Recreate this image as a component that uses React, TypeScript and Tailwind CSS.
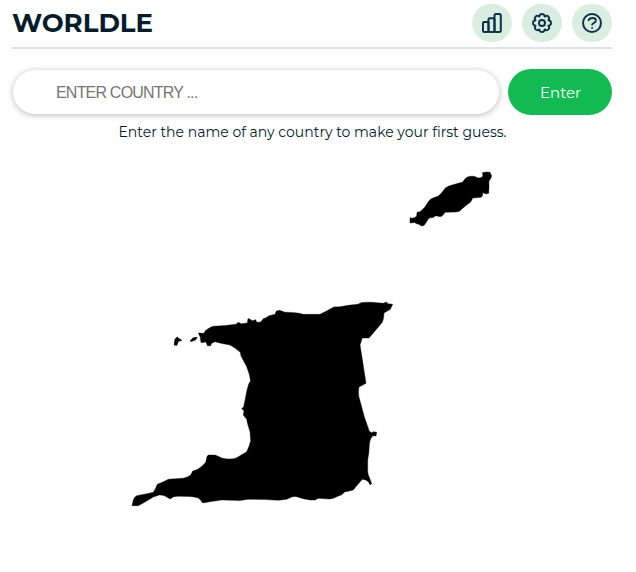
import type { ReactNode } from "react";

function RoundButton({ label, children }: { label: string; children: ReactNode }) {
  return (
    <button aria-label={label} className="flex h-[38px] w-10 items-center justify-center rounded-full bg-[#d9eee1] text-[#0d3349]">
      <svg width="24" height="24" viewBox="0 0 24 24" fill="none" stroke="currentColor" strokeWidth="2" strokeLinecap="round" strokeLinejoin="round">
        {children}
      </svg>
    </button>
  );
}

function CountryShape() {
  return (
    <svg className="mt-[18px] block" width="600" height="400" viewBox="12 160 600 400" fill="#000" stroke="#000" strokeWidth="0.4" strokeLinejoin="round">
      <path d="M410 217.7L412 218.3Q415 218 416.7 216L417 212.3L420 211.7L424.5 207.5L428.5 201.5Q430 199 432.3 198.3L438.3 196L441.5 193L445.3 188Q449 185.5 452 185L458.3 183.3L462.7 182L465 178.7Q467.5 176.5 470 176.3Q472 176 474 176.3L478.3 178L482 177.5L482.9 175L482.3 172.7L486 172L490 172.3L491.7 176L490.5 179L488.9 181L489 187L488.7 193.3L486 194L482.7 192.7L482.5 195.5L481.3 197.3L472.7 198L470.7 202L466 205.5L459.3 211.3L456 212L445 212.3Q444 214.5 441.7 216.3Q439 217 437.5 216L435 216L433.5 217.5L430 217.8L428.3 219L426.5 222L424 225.5L421 226L419.5 224.5L416.7 223.8L414.5 222.5L410 223Z" />
      <path d="M198.3 333L204 333.3L205.5 330.5L207.7 329Q210.5 326.8 213.3 326.3Q225 326 236 324.3L238.3 322.3L241 323.7L247.3 323L248 318.5L250 319.3L252.3 320.7L255.7 319.7L256.7 322.3Q259 322.3 261 321.7L263.3 318.7L266 317.8L269 315.7L275 314.3L276.3 311L279.7 310.3L285 312.3Q290 312.2 295 312.7Q299 313 303.3 314.3L320 314.3Q327 311 333.7 307L340 306.7Q348 305 357.7 304.3L361.7 302.6Q366 302 371.7 302.3L383.3 303.3L386.3 302L388 303.7L392.7 304.3L390.3 309.3L384 313Q384 319 382.3 322.3L369 338L362.3 338L360 345L362.7 361.7L366 383.3L359 387Q358 392 358.9 396.7L364.3 416.7L369.3 431.2L371.7 432.7L373.3 431.7L376.7 432.3L376 436L373 435.7Q369.8 438.5 369.4 444L368.8 453L367.7 460L367.7 471.7Q368 475 369.3 477.3L371.7 483.7L370 484.7L368.3 481.7Q366 479.5 362.3 479.3L355 487.7Q354 490 352.3 490.3Q348 491.5 345 491.7L341.7 494.7Q337 496.5 333.3 498.3Q331 499.1 329 499L318.3 498.3L315 500L310 500Q303 499 296.7 496.7Q294 496.3 291.7 497L286.7 499.3L278.3 500.3Q263 499.2 248.3 499.3L240 500.5L221.7 500L211 501.5L202.7 503L200.5 500L198.3 498Q194 496.8 190 496.5L180 496.3Q176 496 173.3 497L170 499L165 496Q162 494.8 159.3 495L153.3 497L145 502L138.3 505.7L132 505.7L133.3 500Q134.5 496.8 136.7 495.7L147 493.7L153.3 492.3Q155.6 489 157.3 484.3L164 481.5L168.3 479.3L176 478.8L183.3 478.2Q187.5 477.5 190.7 475L192.7 471Q197 470 200 467.7Q203.7 465 205.7 462.3L207 456.5L208.3 455L215 455Q218 456 221.7 458Q226 459.2 230 459Q233.5 458.9 236.7 457.7L246.7 451.7Q249.5 446 250.7 440.7L250 431.7L247.5 423.5L246.7 419.3L243.3 415L244 410.7L241.7 408.7L243.7 406.7L247 390L248.7 384L250.5 381L249.5 375L246.7 366.7L241 356L240.3 352.3L235.3 348.2L230 345L222 343.5L215 341.7L211.7 343.3L210.3 346L207.3 345.5L206 342L201 342.7L200.3 337.3Z" />
      <path strokeWidth="0.8" d="M174.3 345L175 339.3L177.3 337L179 338.7L181.7 340.3L178.3 341.3L176.7 345.3ZM190 341L193 338L197 337.3L195.7 339.7L191.7 341.3Z" />
    </svg>
  );
}

export default function App() {
  return (
    <div className="h-[572px] w-[636px] overflow-hidden bg-white pl-3 font-['Montserrat','Inter',sans-serif] text-[#041c2c]">
      <header className="flex h-[49px] w-[600px] items-start justify-between border-b-2 border-[#d7e3ee] pt-1">
        <h1 className="text-[26px] leading-[38px] font-bold">WORLDLE</h1>
        <div className="flex gap-2.5">
          <RoundButton label="Statistics">
            <rect x="3" y="11" width="5.5" height="10" rx="1.2" />
            <rect x="8.5" y="7.2" width="6" height="13.8" rx="1.2" />
            <rect x="14.5" y="3" width="6.3" height="18" rx="1.5" />
          </RoundButton>
          <RoundButton label="Settings">
            <path d="M9.7 4.2C10.2 2.6 13.8 2.6 14.3 4.2L14.7 5.5L16 4.9C17.6 4.2 19.8 6.4 19.1 8L18.5 9.3L19.8 9.7C21.4 10.2 21.4 13.8 19.8 14.3L18.5 14.7L19.1 16C19.8 17.6 17.6 19.8 16 19.1L14.7 18.5L14.3 19.8C13.8 21.4 10.2 21.4 9.7 19.8L9.3 18.5L8 19.1C6.4 19.8 4.2 17.6 4.9 16L5.5 14.7L4.2 14.3C2.6 13.8 2.6 10.2 4.2 9.7L5.5 9.3L4.9 8C4.2 6.4 6.4 4.2 8 4.9L9.3 5.5Z" />
            <circle cx="12" cy="12" r="3" />
          </RoundButton>
          <RoundButton label="Help">
            <circle cx="12" cy="12" r="9" />
            <path strokeWidth="1.8" d="M8.6 9.2C10 6 16 6.4 15.9 9.6C15.8 12.1 12.1 12.1 12.1 13.7M12.1 17v.1" />
          </RoundButton>
        </div>
      </header>
      <form className="mt-5 flex w-[600px] items-center justify-between" onSubmit={(event) => event.preventDefault()}>
        <input
          aria-label="Country"
          placeholder="ENTER COUNTRY ..."
          className="ml-px h-11 w-[486px] rounded-full bg-white px-[43px] pt-px font-['Liberation_Sans',Arial,sans-serif] text-base tracking-[-0.8px] shadow-[0_1px_6px_rgba(0,0,0,0.28)] outline-none placeholder:text-[#757575]"
        />
        <button className="h-[46px] w-[104px] rounded-full bg-[#12bb52] pt-0.5 pl-px text-[15px] text-white">Enter</button>
      </form>
      <p className="mt-[7px] h-5 w-[601px] text-center text-sm leading-5 whitespace-nowrap">Enter the name of any country to make your first guess.</p>
      <CountryShape />
    </div>
  );
}
